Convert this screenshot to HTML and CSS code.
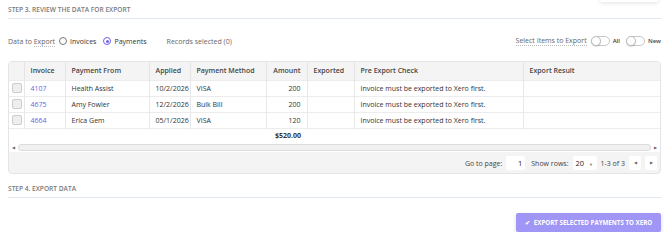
FILE: index.html
```html
<!DOCTYPE html>
<html>
<head>
<meta charset="utf-8">
<link rel="stylesheet" href="styles.css">
</head>
<body>
<div class="page">
  <div class="ghost-shadow"></div>
  <div class="section-title">Step 3. Review the data for export</div>
  <div class="controls">
    <div class="ctl-left">
      <span class="label">Data to <span class="u">Export</span></span>
      <span class="radio"></span><span class="opt">Invoices</span>
      <span class="radio on"></span><span class="opt">Payments</span>
      <span class="records">Records selected (0)</span>
    </div>
    <div class="ctl-right">
      <span class="label u">Select Items to Export</span>
      <span class="toggle"><span class="knob"></span></span><span class="tlabel">All</span>
      <span class="toggle"><span class="knob"></span></span><span class="tlabel">New</span>
    </div>
  </div>
  <div class="grid-box">
    <table class="grid">
      <colgroup>
        <col style="width:15px"><col style="width:41px"><col style="width:84px"><col style="width:41px"><col style="width:76px"><col style="width:41px"><col style="width:47px"><col style="width:169px"><col>
      </colgroup>
      <thead>
        <tr><th></th><th>Invoice</th><th>Payment From</th><th>Applied</th><th>Payment Method</th><th class="r">Amount</th><th>Exported</th><th>Pre Export Check</th><th>Export Result</th></tr>
      </thead>
      <tbody>
        <tr><td><span class="cb"></span></td><td><a class="link">4107</a></td><td>Health Assist</td><td class="r">10/2/2026</td><td>VISA</td><td class="r">200</td><td></td><td>Invoice must be exported to Xero first.</td><td></td></tr>
        <tr><td><span class="cb"></span></td><td><a class="link">4675</a></td><td>Amy Fowler</td><td class="r">12/2/2026</td><td>Bulk Bill</td><td class="r">200</td><td></td><td>Invoice must be exported to Xero first.</td><td></td></tr>
        <tr><td><span class="cb"></span></td><td><a class="link">4664</a></td><td>Erica Gem</td><td class="r">05/1/2026</td><td>VISA</td><td class="r">120</td><td></td><td>Invoice must be exported to Xero first.</td><td></td></tr>
        <tr class="total"><td></td><td></td><td></td><td></td><td></td><td class="r b">$520.00</td><td></td><td></td><td></td></tr>
      </tbody>
    </table>
    <div class="hscroll">
      <span class="arr">&#9664;</span>
      <span class="track"></span>
      <span class="arr ar">&#9654;</span>
    </div>
    <div class="pager">
      <span>Go to page:</span>
      <span class="pbox">1</span>
      <span class="ml">Show rows:</span>
      <span class="sel">20 <span class="caret">&#9660;</span></span>
      <span>1-3 of 3</span>
      <span class="pbtn">&#9664;</span>
      <span class="pbtn">&#9654;</span>
    </div>
  </div>
  <div class="section-title step4">Step 4. Export data</div>
  <div class="actions">
    <button class="export-btn"><span class="check">&#10004;</span>Export selected payments to Xero</button>
  </div>
</div>
</body>
</html>
```
FILE: styles.css
```css
* { box-sizing: border-box; }
html, body { margin: 0; padding: 0; background: #fff; }
body { font-family: "Open Sans", "Noto Sans", sans-serif; color: #444; font-size: 7px; }
.page { position: relative; width: 670px; padding: 0 9px 0 8px; }
.ghost-shadow { position: absolute; left: 600px; top: -10px; width: 58px; height: 12px; background: #fff; box-shadow: 0 1px 4px rgba(0,0,0,0.12); border-radius: 2px; }
.section-title { text-transform: uppercase; font-size: 6.6px; font-weight: 600; color: #7a7a7a; padding-top: 5px; height: 19px; border-bottom: 1px solid #dfe6f1; }
.controls { display: flex; justify-content: space-between; align-items: center; height: 42px; padding-top: 2px; }
.ctl-left, .ctl-right { display: flex; align-items: center; }
.label { color: #666; margin-right: 4px; }
.u { border-bottom: 1px dotted #bbb; }
.radio { width: 8px; height: 8px; border: 1px solid #777; border-radius: 50%; margin: 0 3px 0 0; display: inline-block; position: relative; }
.radio.on { border-color: #7062e8; }
.radio.on::after { content: ""; position: absolute; left: 1.5px; top: 1.5px; width: 3px; height: 3px; border-radius: 50%; background: #7062e8; }
.opt { color: #333; margin-right: 7px; }
.records { color: #666; margin-left: 13px; }
.toggle { width: 19px; height: 10px; border: 1px solid #c8c8c8; border-radius: 6px; display: inline-block; position: relative; margin: 0 3px 0 0; background: #fff; }
.knob { position: absolute; left: -1px; top: -1px; width: 10px; height: 10px; border-radius: 50%; background: #fff; border: 1px solid #bdbdbd; box-shadow: 0 1px 1px rgba(0,0,0,0.15); }
.tlabel { font-size: 6px; font-weight: 600; color: #444; margin-right: 6px; }
.tlabel:last-child { margin-right: 0; }
.grid-box { border: 1px solid #e4e4e4; border-radius: 4px; background: #f4f4f4; overflow: hidden; height: 113px; }
.grid { width: 100%; border-collapse: collapse; table-layout: fixed; }
.grid th { background: #f4f4f4; font-weight: 600; color: #444; height: 18px; text-align: left; padding: 0 6px; border-left: 1px solid #e4e4e4; white-space: nowrap; }
.grid th:first-child, .grid td:first-child { border-left: none; padding: 0 3px; }
.grid td { background: #fff; height: 16px; padding: 0 6px; border-left: 1px solid #e8e8e8; border-top: 1px solid #ececec; color: #333; white-space: nowrap; }
.grid tr.total td { border-left: none; height: 15px; border-top: 1px solid #ececec; }
.r { text-align: right !important; }
.b { font-weight: 700; color: #333; }
.link { color: #6a5fe0; text-decoration: none; }
.cb { display: block; width: 10px; height: 10px; border: 1px solid #ccc; border-radius: 2px; background: #eee; }
.hscroll { display: flex; align-items: center; height: 9px; background: #fff; padding: 1px 3px 1px; }
.arr { font-size: 4px; color: #666; width: 6px; }
.arr.ar { text-align: right; }
.track { flex: 1; height: 7px; border: 1px solid #ddd; border-radius: 3px; background: #f0f0f0; }
.pager { display: flex; justify-content: flex-end; align-items: center; height: 22px; padding-right: 3px; gap: 4px; color: #444; }
.ml { margin-left: 2px; }
.pbox { width: 19px; height: 14px; background: #fff; border-radius: 2px; text-align: right; padding-right: 3px; line-height: 14px; color: #222; font-size: 7.5px; }
.sel { width: 24px; height: 14px; background: #fff; border-radius: 2px; line-height: 14px; padding-left: 3px; color: #222; font-size: 7.5px; }
.caret { font-size: 4px; color: #777; margin-left: 3px; }
.pbtn { width: 12px; height: 14px; background: #fff; border-radius: 2px; font-size: 4px; color: #666; text-align: center; line-height: 14px; }
.step4 { margin-top: 5px; }
.actions { display: flex; justify-content: flex-end; padding-top: 15px; }
.export-btn { font-family: "Open Sans", sans-serif; font-size: 6.2px; font-weight: 700; text-transform: uppercase; color: #fff; background: #a096f5; border: none; border-radius: 2px; width: 145px; height: 19px; box-shadow: 0 2px 4px rgba(0,0,0,0.15); white-space: nowrap; padding: 0; }
.check { font-size: 6px; margin-right: 4px; }
```
